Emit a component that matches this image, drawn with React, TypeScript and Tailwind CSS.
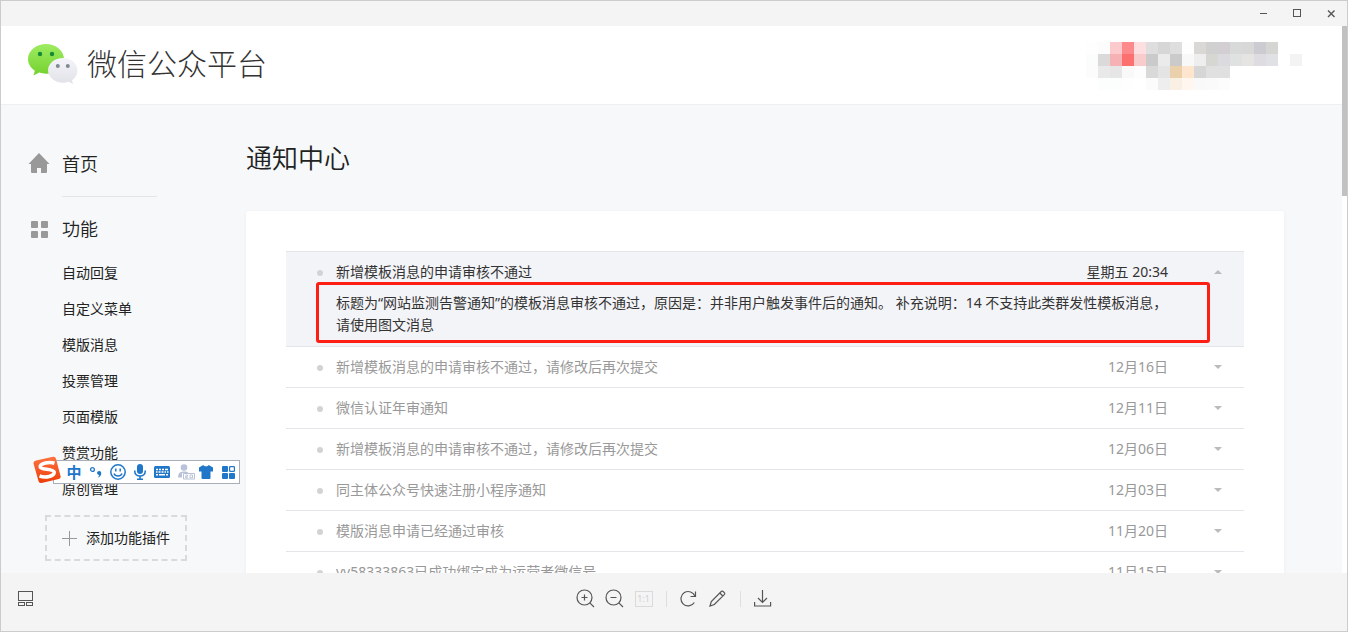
import React from 'react';

const menuItems = ['自动回复', '自定义菜单', '模版消息', '投票管理', '页面模版', '赞赏功能', '原创管理'];

const notices = [
  { title: '新增模板消息的申请审核不通过，请修改后再次提交', date: '12月16日' },
  { title: '微信认证年审通知', date: '12月11日' },
  { title: '新增模板消息的申请审核不通过，请修改后再次提交', date: '12月06日' },
  { title: '同主体公众号快速注册小程序通知', date: '12月03日' },
  { title: '模版消息申请已经通过审核', date: '11月20日' },
  { title: 'vv58333863已成功绑定成为运营者微信号', date: '11月15日' },
];

// Censored account block, one colour per 12px cell
const mosaic = [
  ['#fefefe', '#fcfcfc', '#fccacc', '#fc8a8c', '#fddfe2', '#dedede', '#d6d6d6', '#dedede', '#fefefe', '#d9d8d4', '#d0d0d0', '#d2ced2', '#d8dada', '#d8d8d8', '#cccbd1', '#d4d6d4'],
  ['#fbfdfd', '#dadada', '#f6b1b4', '#fc7070', '#f8cbcd', '#cacaca', '#ebebeb', '#cacaca', '#f8f8f8', '#eeeeee', '#d6d6d3', '#dbdadf', '#e0e2e2', '#e5e4e2', '#dedce1', '#e0e1e4', '#ffffff', '#f3f3f3'],
  ['#fcfcfc', '#e9e9e9', '#e6e6e6', '#f9f9f9', '#fdfdfd', '#d9d9d9', '#e4e4e4', '#ebd0ac', '#fee5cd', '#d6d6d6', '#e0e0e0', '#e0e0e0'],
  ['#ffffff', '#fcfdfd', '#fbfefd', '#fefefe', '#ffffff', '#fbfbfb', '#eeeeee', '#faefe3', '#fff6ef', '#f9f9fa', '#fafafa', '#fcfcfc'],
];

function TitleBar() {
  return (
    <div className="flex h-[25px] shrink-0 justify-end bg-[#f4f4f4]">
      <button aria-label="最小化" className="flex w-[34px] items-center justify-center">
        <svg width="12" height="12" fill="none" stroke="#555" shapeRendering="crispEdges">
          <path d="M4 5.500h7" />
        </svg>
      </button>
      <button aria-label="最大化" className="flex w-[34px] items-center justify-center">
        <svg width="12" height="12" fill="none" stroke="#555" shapeRendering="crispEdges">
          <path d="M3.500 1.500h7v7h-7z" />
        </svg>
      </button>
      <button aria-label="关闭" className="flex w-[34px] items-center justify-center">
        <svg width="12" height="12" fill="none" stroke="#555" strokeWidth="1.400">
          <path d="M4 2.500l6.500 6.500M10.500 2.500l-6.500 6.500" />
        </svg>
      </button>
    </div>
  );
}

function WechatLogo() {
  return (
    <svg width="50" height="42" viewBox="0 0 50 42">
      <defs>
        <linearGradient id="green" x1="0" y1="0" x2="0" y2="1">
          <stop offset="0" stopColor="#9eec62" />
          <stop offset="1" stopColor="#74d12e" />
        </linearGradient>
        <linearGradient id="grey" x1="0" y1="0" x2="0" y2="1">
          <stop offset="0" stopColor="#f4f4fb" />
          <stop offset="1" stopColor="#e1e2e6" />
        </linearGradient>
      </defs>
      <path d="M18 1C8 1 0 7.800 0 16c0 4.700 2.600 8.900 6.800 11.700L5.500 32.500l5.700-2.900c2.100.7 4.400 1.100 6.800 1.100 10 0 18-6.600 18-14.700S28 1 18 1z" fill="url(#green)" />
      <circle cx="12" cy="11" r="2.200" fill="#168a35" />
      <circle cx="24" cy="11" r="2.200" fill="#168a35" />
      <path d="M35 15c-8.200 0-15 5.500-15 12.300s6.800 12.400 15 12.400c2 0 3.900-.3 5.600-.9l4.400 2.200-1-3.700c3.400-2.300 5.500-5.900 5.500-10C49.500 20.500 43.200 15 35 15z" fill="url(#grey)" />
      <circle cx="29.800" cy="23" r="2" fill="#818a8f" />
      <circle cx="39.800" cy="23" r="2" fill="#818a8f" />
    </svg>
  );
}

function Header() {
  return (
    <header className="flex h-[79px] items-start justify-between border-b border-[#eeeff0] bg-white pt-4 pr-10 pl-[27px]">
      <a href="#" className="flex items-center gap-[9px] text-[30px] leading-[44px] font-light text-[#333]">
        <WechatLogo />
        微信公众平台
      </a>
      <svg width="216" height="48" role="img" aria-label="账号" shapeRendering="crispEdges">
        {mosaic.map((row, y) =>
          row.map((color, x) => (
            <rect key={`${x}-${y}`} x={x * 12} y={y * 12} width="12" height="12" fill={color} />
          ))
        )}
      </svg>
    </header>
  );
}

function Sidebar() {
  return (
    <nav className="w-[245px] shrink-0 pt-[45px] pl-[27px] text-[#222]">
      <a href="#" className="flex h-7 items-center gap-3 text-lg font-[350]">
        <svg width="22" height="22" viewBox="0 0 22 22" fill="#999">
          <path d="M11 0L21.500 11H19v8q0 1-1 1h-5v-5H9v5H4q-1 0-1-1v-8H.5z" />
        </svg>
        首页
      </a>
      <div className="my-[18px] ml-[34px] w-[95px] border-t border-[#e4e5e7]" />
      <div className="flex h-7 items-center gap-3 text-lg font-[350]">
        <svg width="22" height="22" viewBox="0 0 22 22" fill="#999">
          <rect x="3" y="3" width="7" height="7" rx="1" />
          <rect x="13" y="3" width="7" height="7" rx="1" />
          <rect x="3" y="13" width="7" height="7" rx="1" />
          <rect x="13" y="13" width="7" height="7" rx="1" />
        </svg>
        功能
      </div>
      <ul className="mt-3 pl-[34px] text-sm">
        {menuItems.map((item) => (
          <li key={item} className="flex h-9 items-center">
            <a href="#">{item}</a>
          </li>
        ))}
      </ul>
      <button className="mt-2 ml-[17px] flex h-[46px] w-[142px] items-center gap-[9px] border-2 border-dashed border-[#d9dadc] pl-[15px] text-sm">
        <svg width="15" height="15" stroke="#999" shapeRendering="crispEdges">
          <path d="M7.500 0v15M0 7.500h15" />
        </svg>
        添加功能插件
      </button>
    </nav>
  );
}

function Caret({ up = false }: { up?: boolean }) {
  return (
    <svg width="8" height="4" fill="#bbb">
      <path d={up ? 'M0 4L4 0l4 4z' : 'M0 0h8L4 4z'} />
    </svg>
  );
}

function NoticeRow({ title, date, open = false }: { title: string; date: string; open?: boolean }) {
  return (
    <button className="flex h-10 w-full items-center pr-[22px] pl-[31px] text-left text-sm">
      <span className="mt-[2px] mr-[13px] size-[6px] rounded-full bg-[#d3d3d3]" />
      <span className="flex-1">{title}</span>
      <span className="mr-[46px]">{date}</span>
      <Caret up={open} />
    </button>
  );
}

function NoticeList() {
  return (
    <section className="rounded-[3px] bg-white p-10 shadow-[0_1px_4px_rgba(0,0,0,0.05)]">
      <ul className="border-t border-[#e4e5e8] text-[#999]">
        <li className="relative border-b border-[#e4e5e8] bg-[#f3f4f8] text-[#333]">
          <NoticeRow title="新增模板消息的申请审核不通过" date="星期五 20:34" open />
          <p className="pr-[76px] pb-[10px] pl-[50px] text-sm leading-[22px]">
            标题为“网站监测告警通知”的模板消息审核不通过，原因是：并非用户触发事件后的通知。 补充说明：14 不支持此类群发性模板消息，请使用图文消息
          </p>
          <div className="pointer-events-none absolute top-[30px] right-[34px] bottom-[3px] left-[30px] rounded-[3px] border-3 border-[#ff1e14]" />
        </li>
        {notices.map((n) => (
          <li key={n.date} className="border-b border-[#e4e5e8]">
            <NoticeRow title={n.title} date={n.date} />
          </li>
        ))}
      </ul>
    </section>
  );
}

function ImeBar() {
  return (
    <div className="absolute top-[431px] left-[32px] flex h-[27px] items-end">
      <svg width="28" height="28" viewBox="0 0 28 28" className="relative z-10 shrink-0">
        <defs>
          <linearGradient id="sogou" x1="0" y1="0" x2="0" y2="1">
            <stop offset="0" stopColor="#fc7442" />
            <stop offset="1" stopColor="#ee3c08" />
          </linearGradient>
        </defs>
        <path d="M3 4.500L20 .8q2.400-.5 3 1.900l4.600 17.500q.5 2.300-1.900 2.900L8.500 27q-2.400.5-3-1.900L.5 7.500Q0 5.200 3 4.500z" fill="url(#sogou)" />
        <path d="M21.500 7.200C16.500 5.600 7 7 7.200 10.800c.3 3.300 13.500 1.400 14 5.300.4 4-8.700 6.200-14.700 3.800" fill="none" stroke="#fff" strokeWidth="3.600" />
      </svg>
      <div className="-ml-2 flex h-6 items-center border border-[#a9aebb] bg-white pl-[9px] text-[#2077c9]">
        <button className="w-[22px] text-[15px] leading-5 font-bold">中</button>
        <button aria-label="中文标点" className="flex w-[22px] justify-center">
          <svg width="16" height="16" viewBox="0 0 16 16">
            <circle cx="4.500" cy="5.500" r="1.900" fill="none" stroke="currentColor" strokeWidth="1.300" />
            <path d="M9 8.500a2.200 2.200 0 0 1 4.300.4c0 2.300-1.300 4-3.600 4.600 1-1 1.400-1.700 1.400-2.500-1.200 0-2.100-1-2.100-2.500z" fill="currentColor" />
          </svg>
        </button>
        <button aria-label="表情" className="flex w-[22px] justify-center">
          <svg width="16" height="16" viewBox="0 0 16 16" fill="none" stroke="currentColor" strokeWidth="1.500">
            <circle cx="8" cy="8" r="7.200" />
            <path d="M5.800 4.500v3M10.200 4.500v3" />
            <path d="M4 9.500c1.200 3.300 6.800 3.300 8 0" />
          </svg>
        </button>
        <button aria-label="语音" className="flex w-[22px] justify-center">
          <svg width="14" height="16" viewBox="0 0 14 16">
            <rect x="4" y="0" width="6" height="10" rx="3" fill="currentColor" />
            <path d="M1.800 6.500v1c0 6 10.400 6 10.400 0v-1M7 12v3M4 15.200h6" fill="none" stroke="currentColor" strokeWidth="1.600" />
          </svg>
        </button>
        <button aria-label="软键盘" className="flex w-[22px] justify-center">
          <svg width="16" height="12" viewBox="0 0 16 12">
            <rect width="16" height="12" rx="1.500" fill="currentColor" />
            <path d="M2 3.500h2m1 0h2m1 0h2m1 0h3M2 6h1.500m1 0h2m1 0h2m1 0h1.500m1 0h1.500M2 8.800h2m1 0h6m1 0h2" stroke="#fff" strokeWidth="1.400" />
          </svg>
        </button>
        <button aria-label="账户" className="flex w-[22px] justify-end text-[#b9c2d8]">
          <svg width="17" height="16" viewBox="0 0 17 16">
            <circle cx="6" cy="3.500" r="3.300" fill="currentColor" />
            <path d="M0 13.500c0-4 2-6 6-6 2 0 3.500.4 4.500 1.500H4v4.500z" fill="currentColor" />
            <path d="M5.500 9.500h11v5.500h-11zM7.500 11h2v1.300h-2v1.500h2.500M12 11h2.500v2.800H12z" fill="#fff" stroke="currentColor" />
          </svg>
        </button>
        <button aria-label="皮肤" className="flex w-[22px] justify-center">
          <svg width="14" height="14" viewBox="0 0 14 14" fill="currentColor">
            <path d="M4.300 0c.8 1.800 4.600 1.800 5.400 0L14 2.500v4h-2.500V13q0 1-1 1h-7q-1 0-1-1V6.500H0v-4z" />
          </svg>
        </button>
        <button aria-label="工具箱" className="flex w-[22px] justify-center">
          <svg width="13" height="13" viewBox="0 0 13 13" fill="currentColor">
            <rect width="6" height="6" rx="1" />
            <rect x="7.600" y=".6" width="4.800" height="4.800" rx=".6" fill="#fff" stroke="currentColor" strokeWidth="1.200" />
            <rect y="7" width="6" height="6" rx="1" />
            <rect x="7" y="7" width="6" height="6" rx="1" />
          </svg>
        </button>
      </div>
    </div>
  );
}

function ViewerToolbar() {
  const tool = 'flex w-[29px] h-6 items-center justify-center';
  return (
    <footer className="grid h-[58px] shrink-0 grid-cols-[1fr_auto_1fr] items-center bg-[#f4f4f4] pb-[7px]">
      <button aria-label="缩略图" className="ml-[17px] w-4">
        <svg width="16" height="16" fill="none" stroke="#555" shapeRendering="crispEdges">
          <path d="M.5 .5h14v9H.5zM.5 11.500h6v3h-6zM8.500 11.500h6v3h-6z" />
        </svg>
      </button>
      <div className="flex items-center">
        <button aria-label="放大" className={tool}>
          <svg width="19" height="19" fill="none" stroke="#555" strokeWidth="1.200">
            <circle cx="8.500" cy="8.500" r="7.500" />
            <path d="M13.800 13.800l4.200 4.200M5.500 8.500h6M8.500 5.500v6" />
          </svg>
        </button>
        <button aria-label="缩小" className={tool}>
          <svg width="19" height="19" fill="none" stroke="#555" strokeWidth="1.200">
            <circle cx="8.500" cy="8.500" r="7.500" />
            <path d="M13.800 13.800l4.200 4.200M5.500 8.500h6" />
          </svg>
        </button>
        <button disabled className={tool}>
          <span className="flex h-4 w-[18px] items-center justify-center border border-[#dadada] text-[9px] leading-none text-[#d0d0d0]">1:1</span>
        </button>
        <span className="mr-[7px] ml-2 h-4 w-px bg-[#dedede]" />
        <button aria-label="旋转" className={tool}>
          <svg width="17" height="17" fill="none" stroke="#555" strokeWidth="1.200">
            <path d="M14.300 12.500A7.200 7.200 0 1 1 15 6.500M15.500 1.500v5h-5" />
          </svg>
        </button>
        <button aria-label="编辑" className={tool}>
          <svg width="17" height="17" fill="none" stroke="#555" strokeWidth="1.200">
            <path d="M1 16l1.300-4.500L12.500 1.300q.7-.5 1.400 0l1.600 1.600q.6.7 0 1.400L5.300 14.500zM10.800 3l3 3" />
          </svg>
        </button>
        <span className="mr-[7px] ml-2 h-4 w-px bg-[#dedede]" />
        <button aria-label="下载" className={tool}>
          <svg width="18" height="17" fill="none" stroke="#555" strokeWidth="1.200">
            <path d="M8.500 0v12M4 8l4.500 4.500L13 8M.6 12v4h16v-4" />
          </svg>
        </button>
      </div>
    </footer>
  );
}

export default function App() {
  return (
    <div
      lang="zh-CN"
      className="flex h-screen flex-col overflow-hidden border border-[#ccc] font-['Noto_Sans','Noto_Sans_CJK_SC',sans-serif]"
    >
      <TitleBar />
      <div className="relative flex min-h-0 flex-1 overflow-hidden">
        <div className="min-w-0 flex-1 bg-[#f6f8f9]">
          <Header />
          <div className="flex">
            <Sidebar />
            <main className="min-w-0 flex-1 pt-[35px] pr-[58px]">
              <h1 className="mb-[35px] text-[26px] leading-9 font-[350] text-[#222]">通知中心</h1>
              <NoticeList />
            </main>
          </div>
        </div>
        <div className="w-[5px] shrink-0 bg-white">
          <div className="h-[170px] bg-[#c1c1c1]" />
        </div>
        <ImeBar />
      </div>
      <ViewerToolbar />
    </div>
  );
}
